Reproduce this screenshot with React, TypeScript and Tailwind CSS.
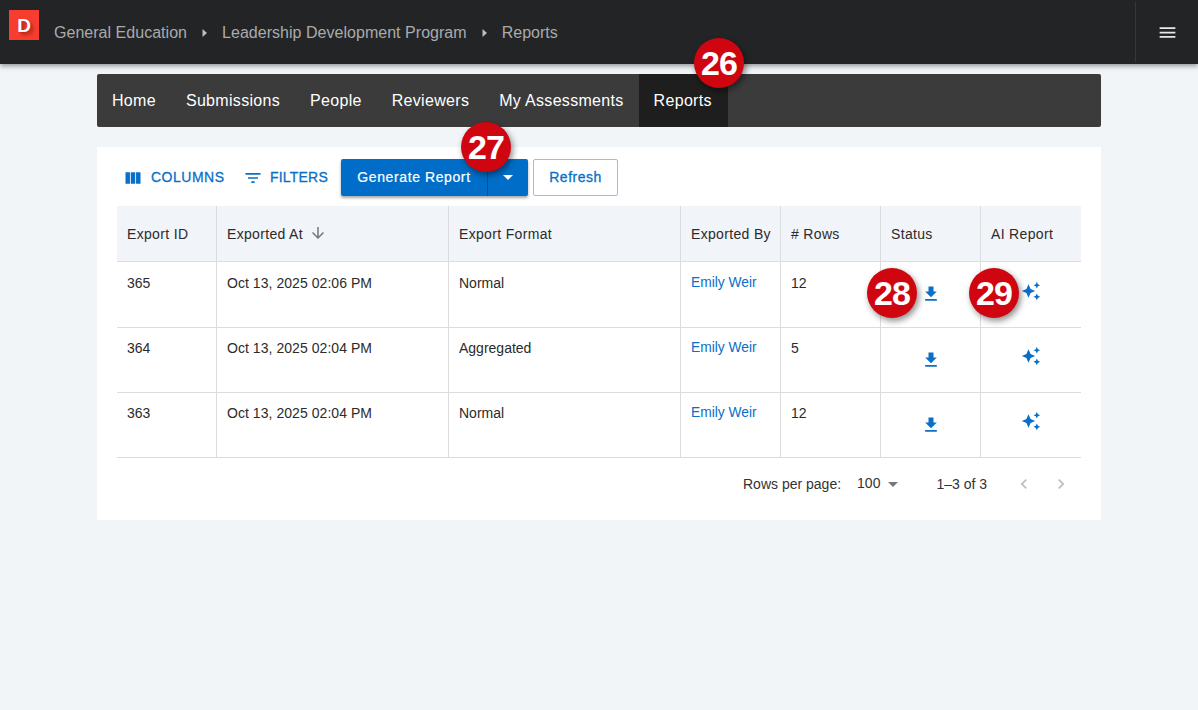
import React from "react";

const Badge = ({ n, x, y }: { n: number; x: number; y: number }) => (
  <div
    className="absolute z-20 w-[50px] h-[50px] rounded-full bg-[#cf0610] text-white flex items-center justify-center text-[34px] font-bold tracking-[-1px] shadow-[2px_3px_6px_rgba(0,0,0,0.45)]"
    style={{ left: x - 25, top: y - 25 }}
  >
    {n}
  </div>
);

const Caret = () => (
  <svg width="7" height="10" viewBox="0 0 7 10" className="fill-[#bdbdbd]">
    <path d="M1.5 1 6 5 1.5 9z" />
  </svg>
);

const DownloadIcon = () => (
  <svg width="20" height="20" viewBox="0 0 24 24" className="fill-[#0a6fc8]">
    <path d="M5 20h14v-2H5zM19 9h-4V3H9v6H5l7 7z" />
  </svg>
);

const SparkleIcon = () => (
  <svg width="20" height="20" viewBox="0 0 24 24" className="fill-[#0a6fc8]">
    <path d="m19 9 1.25-2.75L23 5l-2.75-1.25L19 1l-1.25 2.75L15 5l2.75 1.25zm-7.5.5L9 4 6.5 9.5 1 12l5.5 2.5L9 20l2.5-5.5L17 12zM19 15l-1.25 2.75L15 19l2.75 1.25L19 23l1.25-2.75L23 19l-2.75-1.25z" />
  </svg>
);

const cols = "grid grid-cols-[100px_232px_232px_100px_100px_100px_100px]";
const cell = "px-[10px] border-r border-[#dcdcdc] last:border-r-0";

const headers = ["Export ID", "Exported At", "Export Format", "Exported By", "# Rows", "Status", "AI Report"];
const rows = [
  { id: "365", at: "Oct 13, 2025 02:06 PM", fmt: "Normal", n: "12", h: "h-[66px]", pt: "pt-[11px]", sp: "pt-[19px]" },
  { id: "364", at: "Oct 13, 2025 02:04 PM", fmt: "Aggregated", n: "5", h: "h-[65px]", pt: "pt-[10px]", sp: "pt-[18px]" },
  { id: "363", at: "Oct 13, 2025 02:04 PM", fmt: "Normal", n: "12", h: "h-[66px]", pt: "pt-[10px]", sp: "pt-[18px]" },
];
const tabs = ["Home", "Submissions", "People", "Reviewers", "My Assessments", "Reports"];

export default function App() {
  return (
    <div className="relative w-[1198px] h-[710px] overflow-hidden bg-[#f1f5f8] font-['Liberation_Sans',Arial,sans-serif]">
      <header className="relative z-10 h-[64px] bg-[#232426] flex items-stretch shadow-[0_2px_5px_rgba(0,0,0,0.4)]">
        <div className="ml-[9px] mt-[10px] w-[30px] h-[30px] bg-[#f63d2f] text-white flex items-center justify-center text-[19px] font-bold leading-none [text-shadow:1px_1px_0_rgba(190,40,30,0.8),3px_3px_3px_rgba(130,20,10,0.5)]">
          D
        </div>
        <nav className="ml-[15px] pt-[1px] flex-1 flex items-center text-[16px] tracking-[0.03px] text-[#a9abad]">
          <span>General Education</span>
          <span className="mx-[14px] flex"><Caret /></span>
          <span>Leadership Development Program</span>
          <span className="mx-[14px] flex"><Caret /></span>
          <span>Reports</span>
        </nav>
        <div className="my-[2px] w-[63px] border-l border-[#34363a] flex items-center justify-center">
          <svg width="21" height="21" viewBox="0 0 24 24" className="fill-[#e8e8e8] ml-[1px]">
            <path d="M3 18h18v-2H3zm0-5h18v-2H3zm0-7v2h18V6z" />
          </svg>
        </div>
      </header>

      <main className="mx-[97px] w-[1004px] pt-[10px]">
        <div className="h-[53px] bg-[#3b3b3b] rounded-[2px] flex text-white text-[16px] tracking-[0.31px]">
          {tabs.map((t) => (
            <div
              key={t}
              className={"flex items-center " + (t === "Reports" ? "bg-[#1e1e1e] pl-[15px] pr-[16px]" : "px-[15px]")}
            >
              {t}
            </div>
          ))}
        </div>

        <section className="mt-[20px] h-[373px] bg-white px-[20px] pt-[12px]">
          <div className="h-[37px] flex items-center text-[#0a6fc8]">
            <div className="ml-[6px] w-[103px] flex items-center text-[14px] tracking-[0.5px] [-webkit-text-stroke:0.3px_#0a6fc8]">
              <svg width="20" height="20" viewBox="0 0 24 24" className="fill-[#0a6fc8] mr-[8px]">
                <path d="M14.67 5v14H9.33V5zm1 14H21V5h-5.33zm-7.34 0V5H3v14z" />
              </svg>
              COLUMNS
            </div>
            <div className="ml-[17px] w-[85px] flex items-center text-[14px] tracking-[0.2px] [-webkit-text-stroke:0.3px_#0a6fc8]">
              <svg width="20" height="20" viewBox="0 0 24 24" className="fill-[#0a6fc8] mr-[7px]">
                <path d="M10 18h4v-2h-4zM3 6v2h18V6zm3 7h12v-2H6z" />
              </svg>
              FILTERS
            </div>
            <div className="ml-[13px] h-[37px] w-[187px] flex bg-[#006ec8] text-white rounded-[2px] shadow-[0_2px_3px_rgba(0,0,0,0.35)] text-[14px] tracking-[0.6px]">
              <div className="w-[147px] flex items-center justify-center border-r border-[#0a4f8c] [-webkit-text-stroke:0.2px_white]">
                Generate Report
              </div>
              <div className="flex-1 flex items-center justify-center">
                <svg width="10" height="5" viewBox="0 0 10 5" className="fill-white">
                  <path d="M0 0h10L5 5z" />
                </svg>
              </div>
            </div>
            <div className="ml-[5px] h-[37px] w-[85px] flex items-center justify-center border border-[#96c2e8] rounded-[2px] text-[14px] tracking-[0.5px] text-[#0a6fc8] [-webkit-text-stroke:0.3px_#0a6fc8]">
              Refresh
            </div>
          </div>

          <div className="mt-[10px] text-[14px] leading-[20px] text-[#2b2b2b]">
            <div className={cols + " h-[55px] bg-[#f1f4f8] items-stretch tracking-[0.33px]"}>
              {headers.map((h) => (
                <div key={h} className={cell + " flex items-center pt-[1px] whitespace-nowrap"}>
                  {h}
                  {h === "Exported At" && (
                    <svg width="18" height="18" viewBox="0 0 24 24" className="fill-[#777] ml-[6px] -mt-[2px]">
                      <path d="m20 12-1.41-1.41L13 16.17V4h-2v12.17l-5.58-5.59L4 12l8 8z" />
                    </svg>
                  )}
                </div>
              ))}
            </div>
            {rows.map((r) => (
              <div key={r.id} className={cols + " " + r.h + " border-t border-[#dcdcdc] last:border-b"}>
                <div className={cell + " " + r.pt}>{r.id}</div>
                <div className={cell + " " + r.pt + " tracking-[0.05px]"}>{r.at}</div>
                <div className={cell + " " + r.pt}>{r.fmt}</div>
                <div className={cell + " " + r.pt + " text-[#0a6fc8] text-[13.8px] leading-[20px]"}>Emily Weir</div>
                <div className={cell + " " + r.pt}>{r.n}</div>
                <div className={cell + " pt-[22px] flex justify-center"}>
                  <DownloadIcon />
                </div>
                <div className={cell + " " + r.sp + " flex justify-center"}>
                  <SparkleIcon />
                </div>
              </div>
            ))}
          </div>

          <div className="h-[52px] flex items-center text-[14px] text-[#333]">
            <span className="ml-[626px]">Rows per page:</span>
            <span className="ml-[16px] flex items-center -mt-[2px]">
              100
              <svg width="10" height="5" viewBox="0 0 10 5" className="fill-[#777] ml-[8px] mt-[2px]">
                <path d="M0 0h10L5 5z" />
              </svg>
            </span>
            <span className="ml-[38px]">1–3 of 3</span>
            <svg width="20" height="20" viewBox="0 0 24 24" className="fill-[#bdbdbd] ml-[27px]">
              <path d="M15.41 7.41 14 6l-6 6 6 6 1.41-1.41L10.83 12z" />
            </svg>
            <svg width="20" height="20" viewBox="0 0 24 24" className="fill-[#bdbdbd] ml-[17px]">
              <path d="M10 6 8.59 7.41 13.17 12l-4.58 4.59L10 18l6-6z" />
            </svg>
          </div>
        </section>
      </main>

      <Badge n={26} x={719} y={63} />
      <Badge n={27} x={486} y={147} />
      <Badge n={28} x={892} y={293} />
      <Badge n={29} x={994} y={293} />
    </div>
  );
}
